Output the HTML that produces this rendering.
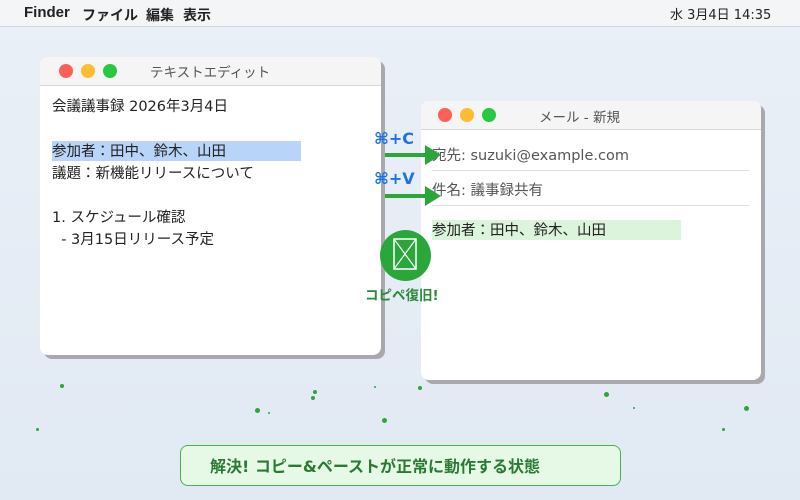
<!DOCTYPE html>
<html><head><meta charset="utf-8"><style>
*{margin:0;padding:0;box-sizing:border-box}
body{width:800px;height:500px;overflow:hidden;position:relative;background:linear-gradient(#eaf0f7,#e1e9f3);font-family:"DejaVu Sans","Noto Sans CJK JP",sans-serif;color:#222}
.menu{position:absolute;left:0;top:0;width:800px;height:27px;background:#f4f5f7;border-bottom:1px solid #d0d6de;font-size:14px}
.menu span{position:absolute;top:4px}
.menu b{position:absolute;top:5px;font-family:"Liberation Sans","Noto Sans CJK JP",sans-serif;font-size:14px}
.win{position:absolute;background:#fff;border-radius:8px;box-shadow:4px 4px 0 #a9a9ad;overflow:hidden}
.tb{height:29px;background:#f5f5f5;border-bottom:1px solid #d8d8d8;position:relative;font-size:13.5px;color:#555}
.dot{position:absolute;top:7px;width:14px;height:14px;border-radius:50%}
.t{position:absolute;font-size:14.5px;white-space:nowrap}
.ab{position:absolute;height:4px;background:#2aa63a}
.ah{position:absolute;width:0;height:0;border-top:10px solid transparent;border-bottom:10px solid transparent;border-left:16px solid #2aa63a}
.sp{position:absolute;width:4px;height:4px;border-radius:50%;background:#2aa63a}
</style></head><body>
<div class="menu"><b style="left:24px;font-size:15px;top:4px">Finder</b><b style="left:82px">ファイル</b><b style="left:146px">編集</b><b style="left:183px">表示</b><span style="left:670px;font-size:13px">水 3月4日 14:35</span></div>

<div class="win" style="left:40px;top:57px;width:341px;height:298px">
 <div class="tb"><div class="dot" style="left:19px;background:#fe5f57"></div><div class="dot" style="left:41px;background:#febc2e"></div><div class="dot" style="left:63px;background:#28c840"></div><div style="position:absolute;left:110px;top:4px">テキストエディット</div></div>
 <div class="t" style="left:12px;top:38px">会議議事録 2026年3月4日</div>
 <div style="position:absolute;left:12px;top:84px;width:249px;height:20px;background:#b8d4f8"></div>
 <div class="t" style="left:12px;top:83px">参加者：田中、鈴木、山田</div>
 <div class="t" style="left:12px;top:105px">議題：新機能リリースについて</div>
 <div class="t" style="left:12px;top:149px">1. スケジュール確認</div>
 <div class="t" style="left:12px;top:171px">&nbsp;&nbsp;- 3月15日リリース予定</div>
</div>

<div class="win" style="left:421px;top:101px;width:340px;height:279px">
 <div class="tb"><div class="dot" style="left:17px;background:#fe5f57"></div><div class="dot" style="left:39px;background:#febc2e"></div><div class="dot" style="left:61px;background:#28c840"></div><div style="position:absolute;left:118px;top:5px">メール - 新規</div></div>
 <div class="t" style="left:11px;top:43px;color:#555">宛先: suzuki@example.com</div>
 <div style="position:absolute;left:11px;top:69px;width:317px;height:1px;background:#ddd"></div>
 <div class="t" style="left:11px;top:78px;color:#555">件名: 議事録共有</div>
 <div style="position:absolute;left:11px;top:104px;width:317px;height:1px;background:#ddd"></div>
 <div style="position:absolute;left:11px;top:119px;width:249px;height:20px;background:#dcf3dc"></div>
 <div class="t" style="left:11px;top:118px">参加者：田中、鈴木、山田</div>
</div>

<div class="t" style="left:374px;top:129px;color:#1a73e8;font-weight:bold;font-size:16px">⌘+C</div>
<div class="ab" style="left:385px;top:153px;width:42px"></div><div class="ah" style="left:425px;top:145px"></div>
<div class="t" style="left:374px;top:169px;color:#1a73e8;font-weight:bold;font-size:16px">⌘+V</div>
<div class="ab" style="left:385px;top:194px;width:42px"></div><div class="ah" style="left:425px;top:186px"></div>
<div style="position:absolute;left:380px;top:230px;width:51px;height:51px;border-radius:50%;background:#2aa63a"></div>
<svg style="position:absolute;left:393px;top:238px" width="24" height="32"><rect x="1" y="1" width="22" height="30" fill="none" stroke="#fff" stroke-width="1.5"/><path d="M1 1L23 31M23 1L1 31" stroke="#fff" stroke-width="1.2"/></svg>
<div class="t" style="left:365px;top:284px;color:#2a8a3a;font-weight:bold;font-size:13.5px">コピペ復旧!</div>

<div class="sp" style="left:60px;top:384px"></div><div class="sp" style="left:313px;top:390px"></div><div class="sp" style="left:311px;top:396px"></div>
<div class="sp" style="left:418px;top:386px"></div><div class="sp" style="left:255px;top:408px;width:5px;height:5px"></div><div class="sp" style="left:382px;top:418px;width:5px;height:5px"></div>
<div class="sp" style="left:604px;top:392px;width:5px;height:5px"></div><div class="sp" style="left:744px;top:406px;width:5px;height:5px"></div>
<div class="sp" style="left:36px;top:428px;width:3px;height:3px"></div><div class="sp" style="left:722px;top:428px;width:3px;height:3px"></div><div class="sp" style="left:633px;top:407px;width:2px;height:2px"></div><div class="sp" style="left:268px;top:412px;width:2px;height:2px"></div><div class="sp" style="left:374px;top:386px;width:2px;height:2px"></div>

<div style="position:absolute;left:180px;top:445px;width:441px;height:41px;border:1px solid #4caf50;border-radius:8px;background:#e6f8e6"></div>
<div class="t" style="left:210px;top:453px;color:#2a7a34;font-weight:bold;font-size:16px">解決! コピー&amp;ペーストが正常に動作する状態</div>
</body></html>
